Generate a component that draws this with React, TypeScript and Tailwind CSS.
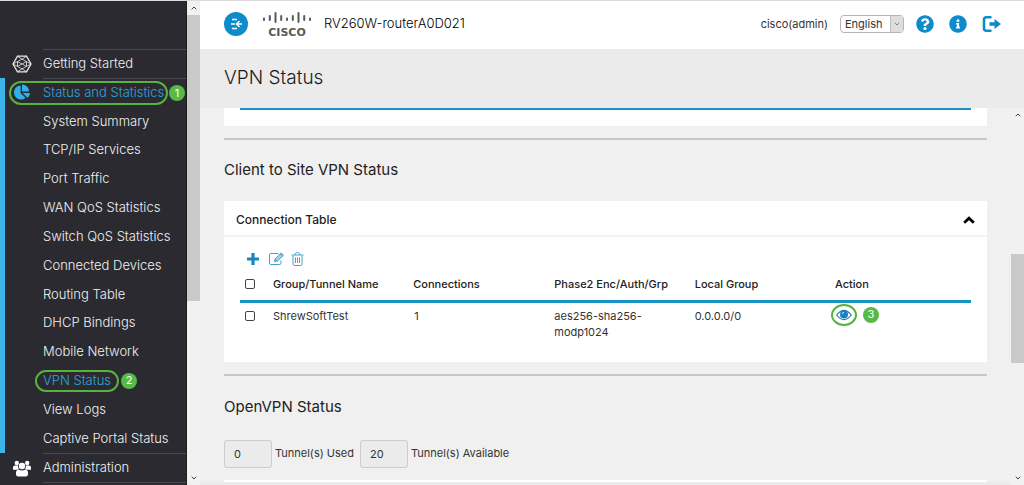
import { useState, type ReactNode } from 'react'
import { FaChartPie, FaInfoCircle, FaQuestionCircle } from 'react-icons/fa'
import { ChevronDown, ChevronUp } from 'lucide-react'

interface Tunnel {
  name: string
  connections: number
  phase2: string
  localGroup: string
}

const STATUS_PAGES = [
  'System Summary',
  'TCP/IP Services',
  'Port Traffic',
  'WAN QoS Statistics',
  'Switch QoS Statistics',
  'Connected Devices',
  'Routing Table',
  'DHCP Bindings',
  'Mobile Network',
  'VPN Status',
  'View Logs',
  'Captive Portal Status',
]

const TUNNELS: Tunnel[] = [
  { name: 'ShrewSoftTest', connections: 1, phase2: 'aes256-sha256-modp1024', localGroup: '0.0.0.0/0' },
]

export default function App() {
  return (
    <div className="flex h-screen overflow-hidden border-t border-[#dcdcdc] bg-[#f0f0f0] font-['Inter','Liberation_Sans',sans-serif] text-[#333]">
      <Sidebar />
      <Scrollbar thumb="top" />
      <div className="flex min-w-0 flex-1 flex-col">
        <Header />
        <div className="flex h-[59px] shrink-0 items-center bg-[#ebebeb] px-6">
          <h1 className="text-[19px] font-light text-[#1c1c1c]">VPN Status</h1>
        </div>
        <div className="flex min-h-0 flex-1">
          <VpnStatus />
          <Scrollbar thumb="middle" />
        </div>
      </div>
    </div>
  )
}

function Sidebar() {
  return (
    <nav
      aria-label="Main"
      className="flex w-[187px] shrink-0 flex-col border-r border-[#1d1d20] bg-[#2b2a30] pt-12 text-[13px] font-light text-[#f2f2f2]"
    >
      <div className="flex h-[29px] items-center">
        <span className="flex w-[43px] shrink-0 justify-center">
          <HexagonIcon />
        </span>
        <a href="#getting-started" className="flex h-full flex-1 items-center border-t border-[#4a494f]">
          Getting Started
        </a>
      </div>
      <ul className="grid flex-1 auto-rows-fr border-l-[5px] border-[#3db4ea]">
        <li className="flex items-center">
          <a
            href="#status"
            className="relative flex h-full flex-1 items-center text-[#2ba6df]"
          >
            <span className="flex w-[38px] shrink-0 justify-center pr-1">
              <FaChartPie className="h-4 w-4 text-[#2fb0ea]" />
            </span>
            <span className="flex h-full flex-1 items-center border-t border-[#4a494f]">
              Status and Statistics
            </span>
            <span className="absolute top-[3px] left-1 h-6 w-[159px] rounded-full border-2 border-[#57b33e]" />
            <Marker className="absolute top-[7px] right-px">1</Marker>
          </a>
        </li>
        {STATUS_PAGES.map((page) => (
          <li key={page} className="flex items-center pl-[38px]">
            {page === 'VPN Status' ? (
              <a href="#page" aria-current="page" className="relative flex items-center text-[#2ba6df]">
                {page}
                <span className="absolute -inset-x-2 -inset-y-px rounded-full border-2 border-[#57b33e]" />
                <Marker className="absolute left-full ml-2.5">2</Marker>
              </a>
            ) : (
              <a href="#page">{page}</a>
            )}
          </li>
        ))}
      </ul>
      <div className="mb-0.5 flex h-[30px] items-center">
        <span className="flex w-[43px] shrink-0 justify-center">
          <UsersIcon />
        </span>
        <a href="#administration" className="flex h-full flex-1 items-center border-y border-[#4a494f]">
          Administration
        </a>
      </div>
    </nav>
  )
}

function Header() {
  const [language, setLanguage] = useState('English')

  return (
    <header className="flex h-12 shrink-0 items-center bg-white pr-[22px] pb-0.5 pl-6">
      <button
        type="button"
        aria-label="Collapse menu"
        className="flex h-6 w-6 items-center justify-center rounded-full bg-[#0d8bcb]"
      >
        <CollapseIcon />
      </button>
      <CiscoLogo />
      <span className="ml-3 text-[13px] font-light text-black">RV260W-routerA0D021</span>
      <span className="ml-auto text-[11px]">cisco(admin)</span>
      <div className="relative ml-3 flex">
        <select
          aria-label="Language"
          value={language}
          onChange={(e) => setLanguage(e.target.value)}
          className="h-[18px] w-16 appearance-none rounded-sm border border-[#b5b5b5] bg-white pl-1 text-[11px] leading-4"
        >
          <option>English</option>
          <option>Deutsch</option>
          <option>Español</option>
        </select>
        <span className="pointer-events-none absolute inset-y-px right-px flex w-[13px] items-center justify-center border-l border-[#bdbdbd] bg-[#dedede]">
          <ChevronDown className="h-2 w-2 text-[#555]" />
        </span>
      </div>
      <button type="button" aria-label="Help" className="ml-3 text-[#0d8bcb]">
        <FaQuestionCircle className="h-[18px] w-[18px]" />
      </button>
      <button type="button" aria-label="About" className="ml-[15px] text-[#0d8bcb]">
        <FaInfoCircle className="h-[18px] w-[18px]" />
      </button>
      <button type="button" aria-label="Log out" className="ml-[15px]">
        <LogoutIcon />
      </button>
    </header>
  )
}

function VpnStatus() {
  return (
    <main className="min-w-0 flex-1 overflow-hidden px-6">
      <div className="h-[18px] bg-white px-4">
        <div className="h-0.5 bg-[#1f8fc9]" />
      </div>
      <hr className="mt-3 border-t-2 border-[#c6c6c6]" />
      <h2 className="mt-[18px] text-[15px] leading-6 text-[#222]">Client to Site VPN Status</h2>
      <ConnectionTable />
      <hr className="mt-3 border-t-2 border-[#c6c6c6]" />
      <h2 className="mt-[19px] text-[15px] leading-6 text-[#222]">OpenVPN Status</h2>
      <div className="mt-[21px] flex items-center text-[11px]">
        <input
          id="tunnels-used"
          readOnly
          value="0"
          className="h-7 w-12 rounded-[3px] border border-[#ccc] bg-[#ebebeb] px-[9px]"
        />
        <label htmlFor="tunnels-used" className="ml-[3px]">
          Tunnel(s) Used
        </label>
        <input
          id="tunnels-available"
          readOnly
          value="20"
          className="ml-1.5 h-7 w-12 rounded-[3px] border border-[#ccc] bg-[#ebebeb] px-[9px]"
        />
        <label htmlFor="tunnels-available" className="ml-[3px]">
          Tunnel(s) Available
        </label>
      </div>
      <div className="mt-3 h-0.5 bg-white" />
      <div className="-mx-6 h-4 bg-[#ebebeb]" />
    </main>
  )
}

function ConnectionTable() {
  const [open, setOpen] = useState(true)

  return (
    <section className="mt-[19px] bg-white">
      <div className="flex h-9 items-center justify-between border-b-2 border-[#f2f2f2] px-3 pt-1 text-[12px] font-medium text-[#222]">
        <h3>Connection Table</h3>
        <button type="button" aria-label="Toggle table" aria-expanded={open} onClick={() => setOpen(!open)}>
          <CollapseArrow />
        </button>
      </div>
      {open && (
        <div className="px-4 pt-3 pb-[22px]">
          <div className="flex h-5 items-center pl-1.5">
            <button type="button" aria-label="Add">
              <PlusIcon />
            </button>
            <button type="button" aria-label="Edit" className="ml-2">
              <EditIcon />
            </button>
            <button type="button" aria-label="Delete" className="ml-1.5">
              <TrashIcon />
            </button>
          </div>
          <table className="w-full table-fixed text-left text-[11px] leading-4">
            <colgroup>
              <col className="w-[4.5%]" />
              <col className="w-[19.2%]" />
              <col className="w-[19.3%]" />
              <col className="w-[19.2%]" />
              <col className="w-[19.2%]" />
              <col />
            </colgroup>
            <thead>
              <tr className="h-8 border-b-[3px] border-[#1a93c8] text-[#222]">
                <th className="pl-[5px]">
                  <Checkbox label="Select all" />
                </th>
                <th className="font-medium">Group/Tunnel Name</th>
                <th className="font-medium">Connections</th>
                <th className="font-medium">Phase2 Enc/Auth/Grp</th>
                <th className="font-medium">Local Group</th>
                <th className="font-medium">Action</th>
              </tr>
            </thead>
            <tbody>
              {TUNNELS.map((tunnel) => (
                <tr key={tunnel.name} className="align-top">
                  <td className="pt-2 pl-[5px]">
                    <Checkbox label={`Select ${tunnel.name}`} />
                  </td>
                  <td className="pt-[5px]">{tunnel.name}</td>
                  <td className="pt-[5px] pl-px">{tunnel.connections}</td>
                  <td className="pt-[5px] pr-8">{tunnel.phase2}</td>
                  <td className="pt-[5px]">{tunnel.localGroup}</td>
                  <td className="relative">
                    <button
                      type="button"
                      aria-label="View details"
                      className="absolute top-px -left-1 flex h-[22px] w-[26px] items-center justify-center rounded-[50%] border-2 border-[#57b33e]"
                    >
                      <EyeIcon />
                    </button>
                    <Marker className="absolute top-1 left-7">3</Marker>
                  </td>
                </tr>
              ))}
            </tbody>
          </table>
        </div>
      )}
    </section>
  )
}

function Checkbox({ label }: { label: string }) {
  return (
    <input
      type="checkbox"
      aria-label={label}
      className="block h-[10px] w-[10px] appearance-none rounded-[2px] border border-[#444] bg-white checked:bg-[#1488bf]"
    />
  )
}

function Marker({ className, children }: { className: string; children: ReactNode }) {
  return (
    <span
      className={`${className} flex h-4 w-4 items-center justify-center rounded-full bg-[#57b947] text-[11px] leading-none font-normal text-white`}
    >
      {children}
    </span>
  )
}

function Scrollbar({ thumb }: { thumb: 'top' | 'middle' }) {
  return (
    <div aria-hidden="true" className="flex w-[13px] shrink-0 flex-col items-center bg-[#f1f1f1] text-[#444]">
      <ChevronUp className="my-[3px] h-2 w-2" strokeWidth={3} />
      <div className="flex w-full flex-1 flex-col">
        {thumb === 'middle' && <div className="grow-[132]" />}
        <div className={thumb === 'top' ? 'grow-[287] bg-[#c9c9c9]' : 'grow-[109] bg-[#c9c9c9]'} />
        <div className={thumb === 'top' ? 'grow-[170]' : 'grow-[108]'} />
      </div>
      <ChevronDown className="my-[3px] h-2 w-2" strokeWidth={3} />
    </div>
  )
}

function CiscoLogo() {
  return (
    <svg role="img" aria-label="Cisco" viewBox="0 0 50 30" className="ml-[14px] h-[30px] w-[50px]">
      <g stroke="#58595b" strokeWidth="2" strokeLinecap="round">
        <path d="M2 9.500v1.500M7.800 7v4M13.500 4v9M19.200 7v4M25 9.500v1.500M30.800 7v4M36.500 4v9M42.200 7v4M48 9.500v1.500" />
      </g>
      <text
        x="25"
        y="27"
        textAnchor="middle"
        fill="#58595b"
        className="font-['DejaVu_Sans',sans-serif] text-[11px] font-bold"
      >
        CISCO
      </text>
    </svg>
  )
}

function CollapseIcon() {
  return (
    <svg viewBox="0 0 24 24" className="h-6 w-6" fill="none" stroke="white" strokeWidth="1.500">
      <path d="M8 7.500h5M7 12h4M8 16.500h5M18 12h-5M15.500 9l-3 3 3 3" />
    </svg>
  )
}

function CollapseArrow() {
  return (
    <svg viewBox="0 0 12 8" className="h-2 w-3" fill="none" stroke="black" strokeWidth="2.800">
      <path d="M1.200 6.800L6 2.200l4.800 4.600" />
    </svg>
  )
}

function PlusIcon() {
  return (
    <svg viewBox="0 0 14 14" className="h-[14px] w-[14px]" stroke="#1488bf" strokeWidth="3.200">
      <path d="M7 1v12M1 7h12" />
    </svg>
  )
}

function LogoutIcon() {
  return (
    <svg viewBox="0 0 20 18" className="h-[18px] w-5">
      <path
        d="M9.500 2.200H4.500a2.500 2.500 0 0 0-2.500 2.500v8.600a2.500 2.500 0 0 0 2.500 2.500h5"
        fill="none"
        stroke="#0d8bcb"
        strokeWidth="2.600"
      />
      <path d="M7.500 7.200h5V4l6.500 5-6.500 5v-3.200h-5z" fill="#0d8bcb" />
    </svg>
  )
}

function HexagonIcon() {
  return (
    <svg viewBox="0 0 20 18" className="h-[18px] w-5" fill="none" stroke="#e8e8e8">
      <path d="M5.500 1.200h9L19 9l-4.500 7.800h-9L1 9z" strokeWidth="1.300" />
      <path
        d="M5.500 1.200l4.500 3 4.500-3M5.500 16.800l4.500-3 4.500 3M10 4.200L5.500 6.600v4.800l4.500 2.400 4.500-2.400V6.600zM5.500 6.600l9 4.800M14.500 6.600l-9 4.800M1 9l4.500-2.400M19 9l-4.500-2.400M1 9l4.500 2.400M19 9l-4.500 2.400"
        strokeWidth="0.800"
      />
    </svg>
  )
}

function UsersIcon() {
  return (
    <svg viewBox="0 0 18 17" className="h-[17px] w-[18px]" fill="white">
      <circle cx="3.800" cy="3" r="2.200" />
      <circle cx="14.200" cy="3" r="2.200" />
      <path d="M0 9.800V7.600Q0 5.600 2 5.600h3Q4.800 8 6.200 9.200L4 9.800zM18 9.800V7.600q0-2-2-2h-3q.2 2.400-1.200 3.600l2.200.6z" />
      <circle cx="9" cy="6" r="3.200" />
      <path d="M3 14.200v-1.500q0-3 2.800-3 3.200 1.600 6.400 0 2.800 0 2.800 3v1.500q0 2.300-2.300 2.300H5.300Q3 16.500 3 14.200z" />
    </svg>
  )
}

function EditIcon() {
  return (
    <svg viewBox="0 0 17 14" className="h-[14px] w-[17px]" fill="none" stroke="#4a9fc9">
      <path d="M10.500 1.500H3q-1.500 0-1.500 1.500v8q0 1.500 1.500 1.500h8.500q1.500 0 1.500-1.500V8.500" />
      <path d="M6.500 9.500l.6-2.600 6-5.900 2.400 2.200-6 5.800z" fill="#a8d3e8" />
      <path d="M12 2l2.500 2.300M7 7l2.300 2.200" />
    </svg>
  )
}

function TrashIcon() {
  return (
    <svg viewBox="0 0 13 14" className="h-[14px] w-[13px]" fill="none" stroke="#4a9fc9">
      <path d="M.5 3h12M4 3q0-2.300 1.500-2.300h2Q9 .7 9 3M2 3.500v8.500q0 1.500 1.500 1.500h6Q11 13.500 11 12V3.500M4.500 5.500v5.500M6.500 5.500v5.500M8.500 5.500v5.500" />
    </svg>
  )
}

function EyeIcon() {
  return (
    <svg viewBox="0 0 16 12" className="h-3 w-4">
      <path d="M.7 6Q8-3.400 15.300 6 8 15.400.7 6z" fill="white" stroke="#1c7fb5" strokeWidth="1.200" />
      <circle cx="8" cy="5.500" r="4" fill="#1c7fb5" />
      <path d="M6 5.200Q6.200 3.500 8 3.300" fill="none" stroke="white" strokeWidth="0.800" />
    </svg>
  )
}
